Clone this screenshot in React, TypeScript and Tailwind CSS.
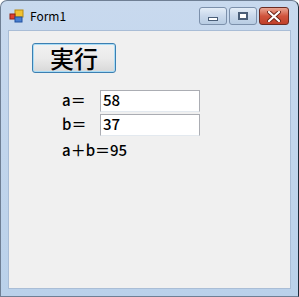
import React from 'react';

const ui = { fontFamily: '"MS UI Gothic", "Noto Sans CJK JP", "Liberation Sans", sans-serif' };

function TitleButton({ kind }: { kind: 'min' | 'max' | 'close' }) {
  const isClose = kind === 'close';
  return (
    <div
      className={`flex items-center justify-center h-[18px] rounded-[3px] border ${
        isClose
          ? 'w-[30px] border-[#6b2b22] bg-gradient-to-b from-[#e8a593] via-[#d0533c] to-[#c0402a]'
          : 'w-[28px] border-[#7c90ab] bg-gradient-to-b from-[#e4edf7] via-[#c9d8eb] to-[#b8cce3]'
      }`}
    >
      {kind === 'min' && <div className="w-[10px] h-[4px] bg-white border border-[#4a5e78] mt-[5px]" />}
      {kind === 'max' && <div className="w-[10px] h-[8px] border-2 border-[#4a5e78] bg-white" />}
      {isClose && (
        <svg width="14" height="11" viewBox="0 0 14 11">
          <path d="M2 1 L12 10 M12 1 L2 10" stroke="#6a2418" strokeWidth="4" strokeLinecap="round" />
          <path d="M2 1 L12 10 M12 1 L2 10" stroke="#ffffff" strokeWidth="2.2" strokeLinecap="round" />
        </svg>
      )}
    </div>
  );
}

export default function App() {
  return (
    <div className="w-[299px] h-[297px] bg-white" style={ui}>
      <div className="w-full h-full flex flex-col rounded-t-[7px] border border-[#6f7f94] border-r-[#1d2a38] bg-gradient-to-b from-[#c8d9ee] to-[#bad1ea]">
        {/* Title bar */}
        <div className="h-[29px] flex items-start pl-[8px] pr-[9px] pt-[6px]">
          <svg width="16" height="16" viewBox="0 0 16 16" className="mt-[1px]">
            <rect x="6" y="2" width="8" height="7" fill="#f2c230" stroke="#b88a10" />
            <rect x="1" y="6" width="5" height="5" fill="#e04030" stroke="#902010" />
            <rect x="6" y="9" width="7" height="5" fill="#4a80d0" stroke="#2050a0" />
          </svg>
          <span className="ml-[5px] text-[12px] leading-[17px] text-black">Form1</span>
          <div className="ml-auto flex gap-[2px]">
            <TitleButton kind="min" />
            <TitleButton kind="max" />
            <TitleButton kind="close" />
          </div>
        </div>
        {/* Client area */}
        <div className="flex-1 mx-[7px] mb-[7px] bg-[#f0f0f0] border border-[#a9bdd6] flex flex-col">
          <div className="pl-[23px] pt-[12px]">
            <button className="w-[84px] h-[30px] rounded-[3px] border border-[#3c7fb1] bg-gradient-to-b from-[#f2f2f2] via-[#ebebeb] to-[#d8d8d8] text-[24px] font-medium leading-none text-black flex items-center justify-center shadow-[inset_0_0_0_1px_#a8dcf6]">
              実行
            </button>
          </div>
          <div className="pl-[53px] pt-[16px] flex flex-col text-[15px] font-medium text-black">
            <div className="flex items-center h-[23px]">
              <span className="w-[38px]">a＝</span>
              <div className="w-[100px] h-[22px] bg-white border border-[#abadb3] border-b-[#e3e9ef] flex items-center pl-[2px]">58</div>
            </div>
            <div className="flex items-center h-[23px] mt-[1px]">
              <span className="w-[38px]">b＝</span>
              <div className="w-[100px] h-[22px] bg-white border border-[#abadb3] border-b-[#e3e9ef] flex items-center pl-[2px]">37</div>
            </div>
            <div className="mt-[3px]">a＋b＝95</div>
          </div>
        </div>
      </div>
    </div>
  );
}
